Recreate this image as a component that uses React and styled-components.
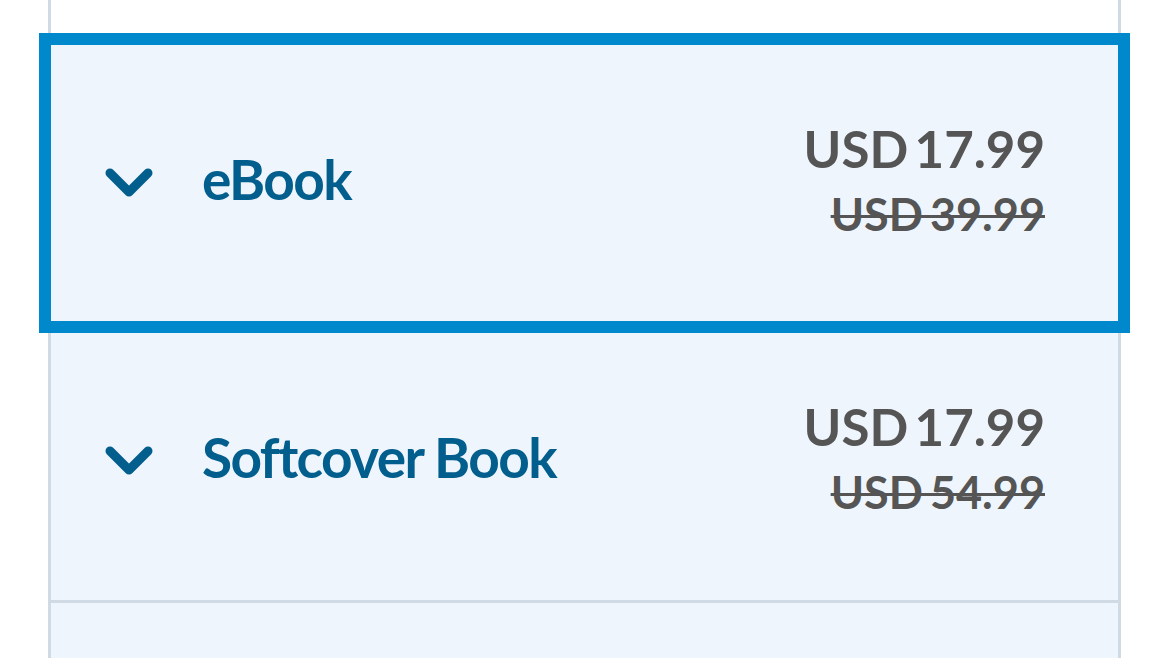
import styled, { createGlobalStyle } from "styled-components";

const GlobalStyle = createGlobalStyle`
  body {
    margin: 0;
    background: #fff;
    font-family: Lato, "Liberation Sans", sans-serif;
  }
`;

const formats = [
    { id: "ebook", title: "eBook", price: "USD 17.99", oldPrice: "USD 39.99", selected: true },
    { id: "softcover", title: "Softcover Book", price: "USD 17.99", oldPrice: "USD 54.99" },
    { id: "next", title: "", price: "", oldPrice: "" },
];

function Chevron() {
    return (
        <ChevronIcon width="48" height="30" viewBox="0 0 48 30">
            <polyline points="5,5 24,24 43,5" fill="none" stroke="currentColor" strokeWidth="9" strokeLinecap="round" strokeLinejoin="round" />
        </ChevronIcon>
    );
}

export default function App() {
    return (
        <>
            <GlobalStyle />
            <Panel>
                <Spacer />
                {formats.map(f => (
                    <Row key={f.id} $selected={f.selected} $empty={!f.title}>
                        {f.title && (
                            <>
                                <Label>
                                    <Chevron />
                                    <Title>{f.title}</Title>
                                </Label>
                                <Prices>
                                    <Price>{f.price}</Price>
                                    <OldPrice>{f.oldPrice}</OldPrice>
                                </Prices>
                            </>
                        )}
                    </Row>
                ))}
            </Panel>
        </>
    );
}

const Panel = styled.div`
margin-left: 48px;
width: 1073px;
box-sizing: border-box;
border-left: 3px solid #d0dae4;
border-right: 3px solid #d0dae4;
`
const Spacer = styled.div`
height: 45px;
background: #fff;
`
const Row = styled.div`
position: relative;
box-sizing: border-box;
height: ${p => (p.$selected ? "276px" : p.$empty ? "55px" : "282px")};
display: flex;
align-items: center;
justify-content: space-between;
padding: 0 73px 0 54px;
background: #eff5fc;
border-bottom: ${p => (p.$selected || p.$empty ? "none" : "3px solid #d0dae4")};
outline: ${p => (p.$selected ? "12px solid #0088cc" : "none")};
z-index: ${p => (p.$selected ? 1 : 0)};
`
const Label = styled.div`
display: flex;
align-items: center;
gap: 49px;
color: #025e8d;
`
const ChevronIcon = styled.svg`
display: block;
flex-shrink: 0;
`
const Title = styled.span`
font-size: 55px;
line-height: 66px;
font-weight: 700;
letter-spacing: -1.6px;
margin-bottom: 8px;
color: #025e8d;
`
const Prices = styled.div`
display: flex;
flex-direction: column;
align-items: flex-end;
color: #555;
font-weight: 700;
margin-top: -6px;
`
const Price = styled.span`
font-size: 51px;
line-height: 62px;
word-spacing: -6px;
margin-bottom: 6px;
`
const OldPrice = styled.span`
font-size: 45px;
line-height: 56px;
word-spacing: -4px;
text-decoration: line-through;
text-decoration-thickness: 3px;
`
